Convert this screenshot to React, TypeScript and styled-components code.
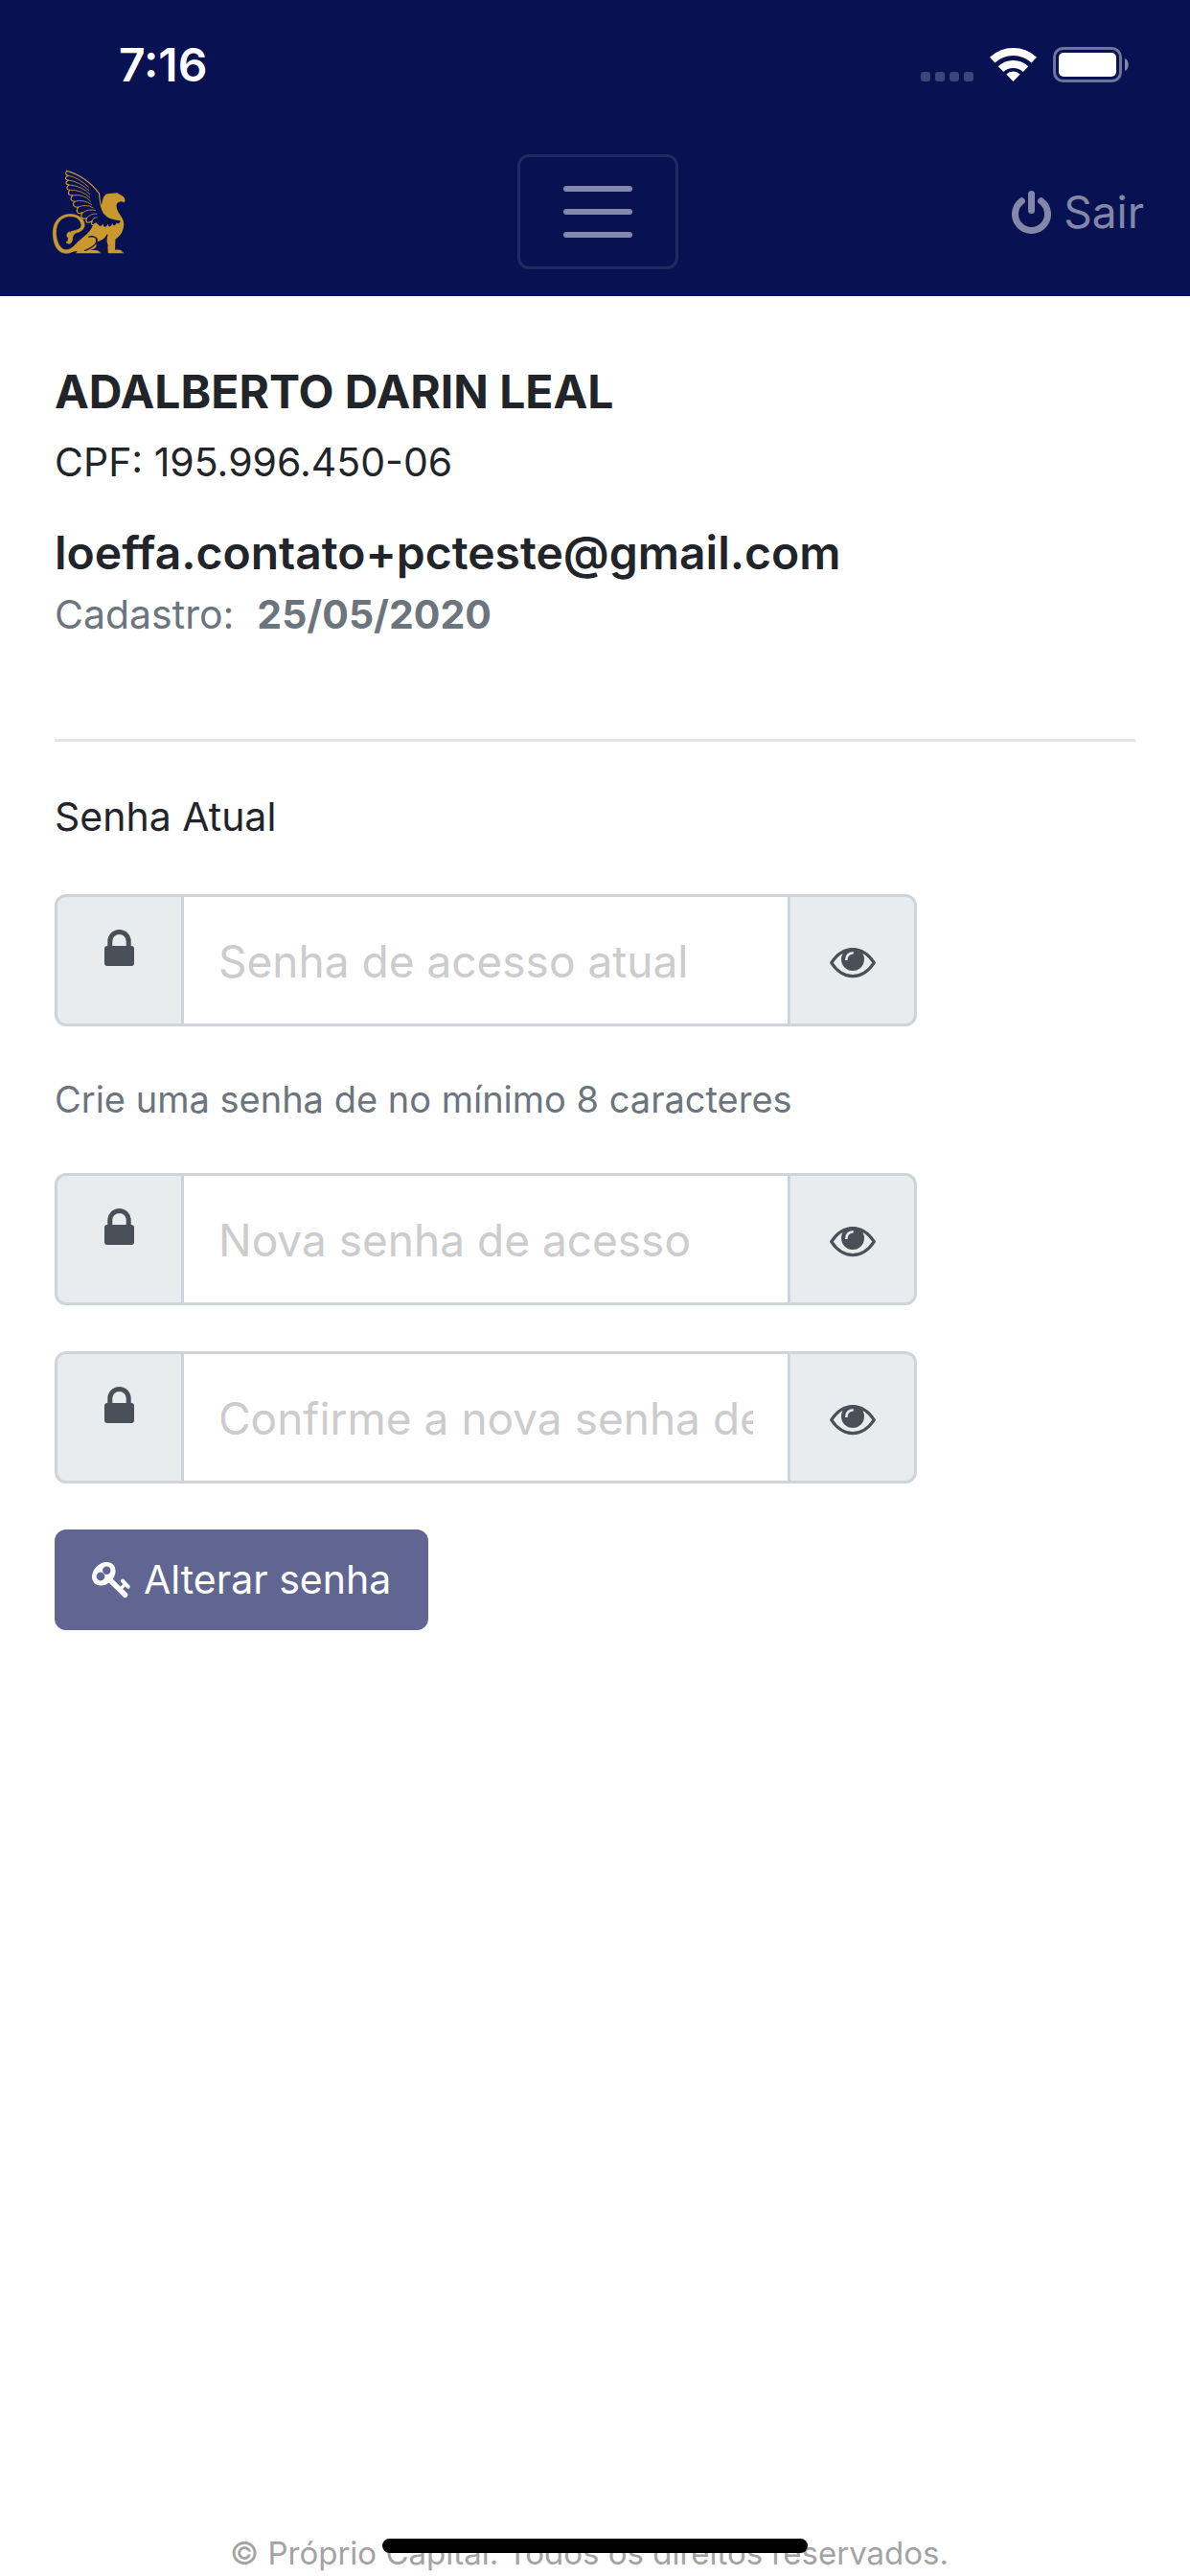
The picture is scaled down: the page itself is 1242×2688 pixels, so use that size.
import { useState } from "react";
import styled, { createGlobalStyle } from "styled-components";

const GlobalStyle = createGlobalStyle`
  *, *::before, *::after {
    box-sizing: border-box;
  }

  body {
    margin: 0;
    background: #fff;
    color: #212529;
    font-family: Inter, "Liberation Sans", sans-serif;
    font-size: 41px;
    line-height: 63px;
  }

  button, input {
    font-family: inherit;
    margin: 0;
  }
`;

const Page = styled.div`
  display: flex;
  flex-direction: column;
  min-height: 100vh;
`;

const Header = styled.header`
  background: #081152;
  padding-bottom: 28px;
`;

const StatusBar = styled.div`
  display: flex;
  justify-content: space-between;
  align-items: center;
  height: 133px;
  padding: 2px 64px 0 124px;
`;

const Clock = styled.time`
  color: #fff;
  font-size: 48px;
  font-weight: 600;
  line-height: 58px;
`;

const StatusIcons = styled.div`
  display: flex;
  align-items: flex-end;
  gap: 17px;
`;

const Navbar = styled.nav`
  display: grid;
  grid-template-columns: 1fr auto 1fr;
  align-items: center;
  height: 148px;
  padding: 28px 48px 0 54px;
`;

const Brand = styled.a`
  display: flex;
`;

const Toggler = styled.button`
  display: flex;
  flex-direction: column;
  justify-content: center;
  align-items: center;
  gap: 18px;
  width: 168px;
  height: 120px;
  padding: 0;
  background: transparent;
  border: 3px solid rgba(255, 255, 255, 0.1);
  border-radius: 12px;
`;

const TogglerBar = styled.span`
  width: 72px;
  height: 6px;
  border-radius: 3px;
  background: rgba(255, 255, 255, 0.5);
`;

const LogoutLink = styled.a`
  display: flex;
  justify-self: end;
  align-items: center;
  gap: 13px;
  color: #8388a8;
  font-size: 46px;
  line-height: 58px;
  text-decoration: none;
`;

const Main = styled.main`
  flex: 1;
  padding: 71px 57px 48px;
`;

const Name = styled.h1`
  margin: 0 0 13px;
  font-size: 48px;
  font-weight: 700;
  line-height: 58px;
`;

const Document = styled.p`
  margin: 0 0 34px;
`;

const Email = styled.h2`
  margin: 0 0 4px;
  font-size: 48px;
  font-weight: 600;
  line-height: 58px;
  overflow-wrap: anywhere;
`;

const Registered = styled.p`
  display: flex;
  gap: 24px;
  margin: 0;
  color: #6c757d;
`;

const Divider = styled.hr`
  margin: 98px 0 45px;
  border: 0;
  border-top: 3px solid #e5e5e5;
`;

const Form = styled.form`
  display: flex;
  flex-direction: column;
  align-items: flex-start;
  gap: 48px;
`;

const Label = styled.label`
  line-height: 66px;
`;

const Hint = styled.p`
  margin: 0;
  color: #6c757d;
  font-size: 38px;
  line-height: 57px;
`;

const InputGroup = styled.div`
  display: flex;
  width: 100%;
  max-width: 900px;
  height: 138px;
  border: 3px solid #ced4da;
  border-radius: 12px;
  background: #e9ecef;
  overflow: hidden;
`;

const Prepend = styled.span`
  display: flex;
  justify-content: center;
  width: 129px;
  padding-top: 34px;
  color: #495057;
`;

const Input = styled.input`
  flex: 1;
  min-width: 0;
  padding: 2px 36px 0;
  border: solid #ced4da;
  border-width: 0 3px;
  border-radius: 0;
  background: #fff;
  color: #495057;
  font-size: 46px;
  outline: none;

  &::placeholder {
    color: #ccc;
    opacity: 1;
  }
`;

const RevealButton = styled.button`
  display: flex;
  justify-content: center;
  align-items: center;
  width: 129px;
  padding: 5px 0 0;
  border: 0;
  background: transparent;
  color: #495057;
`;

const SubmitButton = styled.button`
  display: flex;
  align-items: center;
  gap: 14px;
  height: 105px;
  padding: 0 39px;
  border: 0;
  border-radius: 12px;
  background: #606691;
  color: #fff;
  font-size: 41px;
  line-height: 63px;
`;

const Footer = styled.footer`
  padding: 0 12px 0 0;
  color: #a3a3a3;
  font-size: 33px;
  line-height: 48px;
  text-align: center;
`;

const HomeIndicator = styled.div`
  position: fixed;
  bottom: 24px;
  left: 50%;
  width: 444px;
  height: 15px;
  transform: translateX(-50%);
  border-radius: 8px;
  background: #000;
`;

const SignalIcon = () => (
  <svg width="55" height="37" viewBox="0 0 55 37" fill="#fff" fillOpacity="0.22" aria-hidden="true">
    {[0, 15, 30, 45].map((x) => (
      <rect key={x} x={x} y="26" width="10" height="10" rx="3" />
    ))}
  </svg>
);

const WifiIcon = () => (
  <svg width="49" height="37" viewBox="0 0 49 37" fill="none" stroke="#fff" strokeWidth="8" aria-hidden="true">
    <path d="M2.7 13.6a32 32 0 0 1 43.6 0" />
    <path d="M11.5 23.1a19 19 0 0 1 26 0" />
    <path d="M24.5 36 17.3 28.4a10.6 10.6 0 0 1 14.4 0z" fill="#fff" stroke="none" />
  </svg>
);

const BatteryIcon = () => (
  <svg width="79" height="37" viewBox="0 0 79 37" fill="#fff" aria-hidden="true">
    <rect x="1.5" y="1.5" width="69" height="34" rx="9" fill="none" stroke="#fff" strokeOpacity="0.42" strokeWidth="3" />
    <rect x="6" y="6" width="60" height="25" rx="5" />
    <path d="M75 12c5 2 5 11 0 13z" fillOpacity="0.5" />
  </svg>
);

const PowerIcon = () => (
  <svg width="41" height="45" viewBox="0 0 41 45" fill="none" stroke="currentColor" strokeWidth="7" strokeLinecap="round" aria-hidden="true">
    <path d="M10.4 10.8a17 17 0 1 0 20.2 0" />
    <path d="M20.5 3.6v17" />
  </svg>
);

const LockIcon = () => (
  <svg width="31" height="38" viewBox="0 0 31 38" aria-hidden="true">
    <rect y="17" width="31" height="21" rx="3" fill="currentColor" />
    <path d="M5.8 19v-6.8a9.7 9.7 0 0 1 19.4 0V19" fill="none" stroke="currentColor" strokeWidth="5" />
  </svg>
);

const EyeIcon = () => (
  <svg width="48" height="32" viewBox="0 0 48 32" fill="none" aria-hidden="true">
    <path
      d="M1.7 15.7C8 6.2 16 1.7 24 1.7s16 4.5 22.3 14C40 25.2 32 29.6 24 29.6S8 25.2 1.7 15.7z"
      stroke="currentColor"
      strokeWidth="3.2"
      strokeLinejoin="round"
    />
    <circle cx="24" cy="12" r="12" fill="currentColor" />
    <path d="M17.3 13c0-4.8 2.7-7.6 7.4-7.8" stroke="#e9ecef" strokeWidth="2.6" />
  </svg>
);

const KeyIcon = () => (
  <svg width="40" height="38" viewBox="0 0 40 38" fill="none" stroke="#fff" aria-hidden="true">
    <ellipse cx="12.3" cy="12.3" rx="13.8" ry="10.6" transform="rotate(-45 12.3 12.3)" fill="#fff" stroke="none" />
    <circle cx="15.3" cy="8.8" r="4.2" fill="#606691" stroke="none" />
    <circle cx="9" cy="15" r="4.4" fill="#606691" stroke="none" />
    <path d="m17.5 17.5 17 16.8" strokeWidth="5.6" strokeLinecap="round" />
    <path d="m29.5 28 6-5.5" strokeWidth="3.4" />
    <path d="m32 19.7 5.7 6" strokeWidth="4" strokeLinecap="round" />
  </svg>
);

const GriffinLogo = () => (
  <svg width="78" height="88" viewBox="42 49 233 265" fill="none" stroke="#ca992d" strokeLinecap="round" strokeLinejoin="round" aria-hidden="true">
    {/* tail */}
    <path
      d="M124 276C112 290 98 303 84 301C70 299 60 284 56 262C50 226 64 199 94 196C118 194 130 204 134 222C136 236 118 239 101 244L103 250C122 249 143 242 144 224C145 203 122 188 96 189C60 191 43 220 45 254C47 278 52 298 72 309C92 316 106 309 118 298Z"
      fill="#ca992d"
      strokeWidth="2"
    />
    <path d="M94 245C86 252 88 262 94 264C90 269 96 274 86 277C94 285 104 281 104 273C110 268 102 260 113 251Z" fill="#ca992d" strokeWidth="2" />
    {/* body, head and legs */}
    <path
      d="M200 148C203 133 210 123 222 124L248 122C253 128 269 130 271 143C272 148 269 154 266 151C258 147 249 149 245 158C242 172 251 183 258 194C267 206 270 219 266 233C263 251 251 260 241 269L240 301C252 299 264 300 268 312H218L217 288L211 276L214 254C207 267 196 273 184 275L182 288C178 299 168 300 160 303C175 302 190 299 197 312H117L121 305L98 308C115 296 116 280 133 267C147 256 157 250 168 229C173 219 181 216 187 221C190 229 197 228 202 219C203 231 211 233 218 219C219 230 227 232 231 218C235 228 242 226 244 216C250 221 257 217 256 209C242 207 223 205 211 194C199 182 194 165 200 148Z"
      fill="#ca992d"
      stroke="none"
    />
    <path d="M158 260C178 256 189 266 180 280C173 293 158 298 145 303M181 268L183 284M215 254C211 269 212 279 216 287" stroke="#081152" strokeWidth="4" />
    <path d="M189 305l5 6M260 304l4 6" stroke="#081152" strokeWidth="2" />
    {/* wing */}
    <path d="M88 53C121 60 164 88 190 124C193 148 192 166 206 187" strokeWidth="3.5" />
    <path
      d="M88 53C82 62 85 67 94 68C83 72 80 80 93 82C82 89 84 95 95 97C86 105 87 112 97 113C90 126 93 129 107 130C97 139 101 149 113 149C105 159 109 168 124 167C116 180 121 190 138 184C129 198 135 207 151 201C145 215 153 220 168 210C163 225 170 225 181 217"
      strokeWidth="3.5"
    />
    <path
      d="M94 68Q126 74 157 104M93 82Q130 87 158 115M95 97Q135 99 161 127M97 113Q136 112 161 137M107 130Q141 124 163 148M113 149Q143 141 166 159M124 167Q149 155 171 169M138 184Q157 171 178 177M151 201Q165 185 182 188M168 210Q172 198 183 199"
      strokeWidth="2.5"
    />
  </svg>
);

interface IPasswordField {
  id: string;
  placeholder: string;
  ariaLabel?: string;
}

const PasswordField = ({ id, placeholder, ariaLabel }: IPasswordField) => {
  const [visible, setVisible] = useState(false);

  return (
    <InputGroup>
      <Prepend>
        <LockIcon />
      </Prepend>
      <Input id={id} type={visible ? "text" : "password"} placeholder={placeholder} aria-label={ariaLabel} />
      <RevealButton type="button" aria-label="Mostrar senha" onClick={() => setVisible(!visible)}>
        <EyeIcon />
      </RevealButton>
    </InputGroup>
  );
};

const App = () => {
  return (
    <Page>
      <GlobalStyle />
      <Header>
        <StatusBar>
          <Clock>7:16</Clock>
          <StatusIcons>
            <SignalIcon />
            <WifiIcon />
            <BatteryIcon />
          </StatusIcons>
        </StatusBar>
        <Navbar>
          <Brand href="#" aria-label="Próprio Capital">
            <GriffinLogo />
          </Brand>
          <Toggler type="button" aria-label="Menu">
            <TogglerBar />
            <TogglerBar />
            <TogglerBar />
          </Toggler>
          <LogoutLink href="#">
            <PowerIcon />
            Sair
          </LogoutLink>
        </Navbar>
      </Header>
      <Main>
        <Name>ADALBERTO DARIN LEAL</Name>
        <Document>CPF: 195.996.450-06</Document>
        <Email>loeffa.contato+pcteste@gmail.com</Email>
        <Registered>
          Cadastro: <strong>25/05/2020</strong>
        </Registered>
        <Divider />
        <Form onSubmit={(e) => e.preventDefault()}>
          <Label htmlFor="current">Senha Atual</Label>
          <PasswordField id="current" placeholder="Senha de acesso atual" />
          <Hint>Crie uma senha de no mínimo 8 caracteres</Hint>
          <PasswordField id="new" placeholder="Nova senha de acesso" ariaLabel="Nova senha de acesso" />
          <PasswordField id="confirm" placeholder="Confirme a nova senha de acesso" ariaLabel="Confirme a nova senha de acesso" />
          <SubmitButton type="submit">
            <KeyIcon />
            Alterar senha
          </SubmitButton>
        </Form>
      </Main>
      <Footer>© Próprio Capital. Todos os direitos reservados.</Footer>
      <HomeIndicator />
    </Page>
  );
};

export default App;
